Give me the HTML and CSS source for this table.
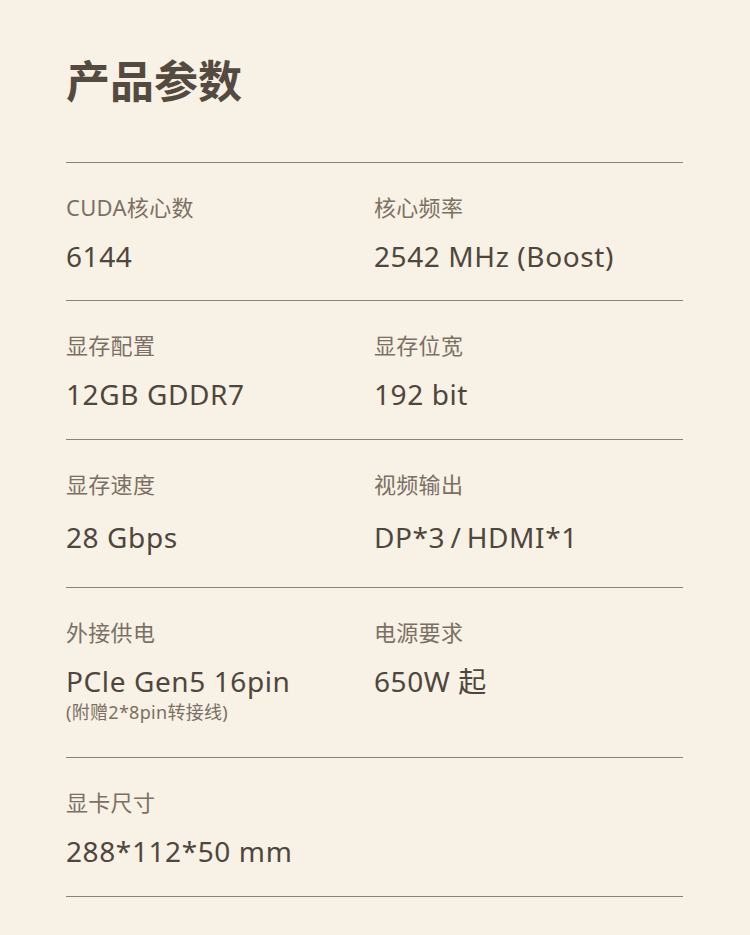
FILE: index.html
```html
<!DOCTYPE html>
<html lang="zh-CN">
<head>
<meta charset="utf-8">
<link rel="stylesheet" href="styles.css">
</head>
<body>
<div class="page">
  <h1 class="title">产品参数</h1>
  <div class="specs">
    <div class="row">
      <div class="cell"><div class="label">CUDA核心数</div><div class="value">6144</div></div>
      <div class="cell"><div class="label">核心频率</div><div class="value">2542 MHz (Boost)</div></div>
    </div>
    <div class="row">
      <div class="cell"><div class="label">显存配置</div><div class="value">12GB GDDR7</div></div>
      <div class="cell"><div class="label">显存位宽</div><div class="value">192 bit</div></div>
    </div>
    <div class="row row-tall">
      <div class="cell"><div class="label">显存速度</div><div class="value">28 Gbps</div></div>
      <div class="cell"><div class="label">视频输出</div><div class="value">DP*3&#8201;/&#8201;HDMI*1</div></div>
    </div>
    <div class="row row-note">
      <div class="cell"><div class="label">外接供电</div><div class="value">PCle Gen5 16pin</div><div class="note">(附赠2*8pin转接线)</div></div>
      <div class="cell"><div class="label">电源要求</div><div class="value">650W 起</div></div>
    </div>
    <div class="row">
      <div class="cell"><div class="label">显卡尺寸</div><div class="value">288*112*50 mm</div></div>
    </div>
  </div>
</div>
</body>
</html>
```
FILE: styles.css
```css
html, body {
  margin: 0;
  padding: 0;
  background: #f8f1e5;
}
body {
  font-family: "Noto Sans", "Noto Sans CJK SC", sans-serif;
  color: #4f463d;
}
.page {
  width: 616px;
  margin-left: 67px;
  padding-top: 52px;
}
.title {
  margin: 0 0 0 -1px;
  font-size: 44px;
  line-height: 58px;
  font-weight: 700;
  color: #544a40;
  padding-bottom: 52px;
  border-bottom: 1px solid #8d8173;
}
.specs {
  margin-left: -1px;
}
.row {
  display: grid;
  grid-template-columns: 308px 1fr;
  height: 139px;
  border-bottom: 1px solid #8d8173;
  box-sizing: border-box;
}
.row:first-child { height: 138px; }
.row-tall { height: 148px; }
.row-note { height: 170px; }
.label {
  margin-top: 29px;
  font-size: 22px;
  line-height: 30px;
  color: #7b7064;
  letter-spacing: 0.3px;
}
.value {
  margin-top: 16px;
  font-size: 28px;
  line-height: 36px;
  color: #4f463d;
  letter-spacing: 0.6px;
}
.row-tall .value { margin-top: 20px; }
.note {
  font-size: 18px;
  line-height: 24px;
  color: #7b7064;
  margin-top: 1px;
  letter-spacing: 0.3px;
}
```
